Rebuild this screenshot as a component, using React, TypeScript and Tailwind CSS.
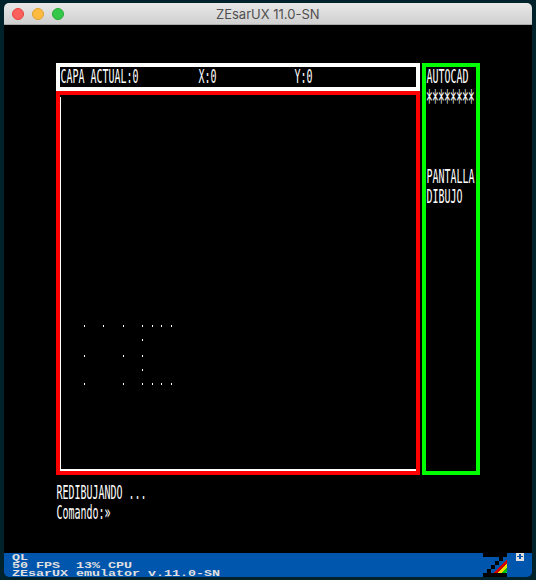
import React from "react";

function Crt({ children }: { children: React.ReactNode }) {
  return (
    <div className="h-5 pl-[0.5px] pt-px">
      <div className="w-fit origin-top scale-y-[1.9] whitespace-pre font-['DejaVu_Sans_Mono',monospace] text-[9.97px] leading-[10px] text-white">
        {children}
      </div>
    </div>
  );
}

function Stars() {
  return (
    <div className="h-5 pt-[2px]">
      <div className="w-fit origin-top scale-y-[2.9] whitespace-pre font-['DejaVu_Sans_Mono',monospace] text-[11px] leading-[10px] tracking-[-0.62px] text-white">
        ********
      </div>
    </div>
  );
}

const dots = [
  [84, 325], [103, 325], [123, 325], [142, 325], [152, 325], [161, 325], [171, 325],
  [142, 339], [84, 355], [123, 355], [142, 355], [142, 369],
  [84, 383], [123, 383], [142, 383], [152, 383], [161, 383], [171, 383],
];

function Footer() {
  return (
    <footer className="flex h-6 items-start bg-[#0055ad] pl-2">
      <div className="w-[471px] whitespace-pre">
        <div className="w-fit origin-top-left translate-y-px scale-x-[1.481] font-['Liberation_Mono',monospace] text-[9px] font-bold leading-[8px] text-[#e0e0e0]">
          <div>QL</div>
          <div>50 FPS  13% CPU</div>
          <div>ZEsarUX emulator v.11.0-SN</div>
        </div>
      </div>
      <svg className="h-6 w-6 shrink-0" viewBox="0 0 24 24" shapeRendering="crispEdges">
        <path fill="#000" d="M0 0h24v4H0zM16 4h4v4h-4zM12 8h4v4h-4zM8 12h4v4H8zM4 16h4v4H4zM0 20h24v4H0z" />
        <path fill="#d00000" d="M10 20L24 6v4L14 20z" />
        <path fill="#e8dc00" d="M14 20L24 10v4l-6 6z" />
        <path fill="#00c000" d="M18 20l6-6v4l-2 2z" />
        <path fill="#00c8d0" d="M22 20l2-2v2z" />
      </svg>
      <svg className="ml-[9px] h-2 w-2 shrink-0" viewBox="0 0 8 8" shapeRendering="crispEdges">
        <path fill="#e0e0e0" d="M0 0h8v8H0z" />
        <path fill="#0055ad" d="M3 1h2v2h2v1H5v2H3V4H1V3h2z" />
      </svg>
    </footer>
  );
}

export default function App() {
  return (
    <div className="h-[580px] w-[536px] bg-[#00222b] px-1 pt-[3px]">
      <div className="h-[574px] overflow-hidden rounded-[5px] bg-black">
        <header className="flex h-[22px] items-center border-b border-[#aaa] bg-linear-to-b from-[#e8e8e8] to-[#d0d0d0] pl-2">
          <div className="flex gap-2">
            <i className="size-3 rounded-full border border-[#e2453f] bg-[#fc605c]" />
            <i className="size-3 rounded-full border border-[#dfa133] bg-[#fdbc40]" />
            <i className="size-3 rounded-full border border-[#27aa35] bg-[#34c84a]" />
          </div>
          <h1 className="ml-[152px] pt-[2px] font-[Inter,sans-serif] text-[13px] leading-none text-[#505050]">ZEsarUX 11.0-SN</h1>
        </header>
        <main className="h-[528px] pl-[52px] pt-[38px]">
          <div className="flex h-[412px] gap-[2px]">
            <div className="w-[364px]">
              <div className="h-7 border-4 border-white">
                <Crt>CAPA ACTUAL:0          X:0             Y:0</Crt>
              </div>
              <div className="h-[384px] border-4 border-[#ff0000] pt-[2px]">
                <div className="h-[374px] border-b-2 border-l border-white">
                  <svg className="h-[372px] w-[355px]" viewBox="61 97 355 372" shapeRendering="crispEdges">
                    {dots.map(([x, y]) => (
                      <rect key={`${x}-${y}`} x={x} y={y} width="1" height="2" fill="#fff" />
                    ))}
                  </svg>
                </div>
              </div>
            </div>
            <div className="w-[58px] border-4 border-[#00ff00]">
              <Crt>AUTOCAD</Crt>
              <Stars />
              <div className="h-[60px]" />
              <Crt>PANTALLA</Crt>
              <Crt>DIBUJO</Crt>
            </div>
          </div>
          <div className="pt-2">
            <Crt>REDIBUJANDO ...</Crt>
            <Crt>Comando:»</Crt>
          </div>
        </main>
        <Footer />
      </div>
    </div>
  );
}
